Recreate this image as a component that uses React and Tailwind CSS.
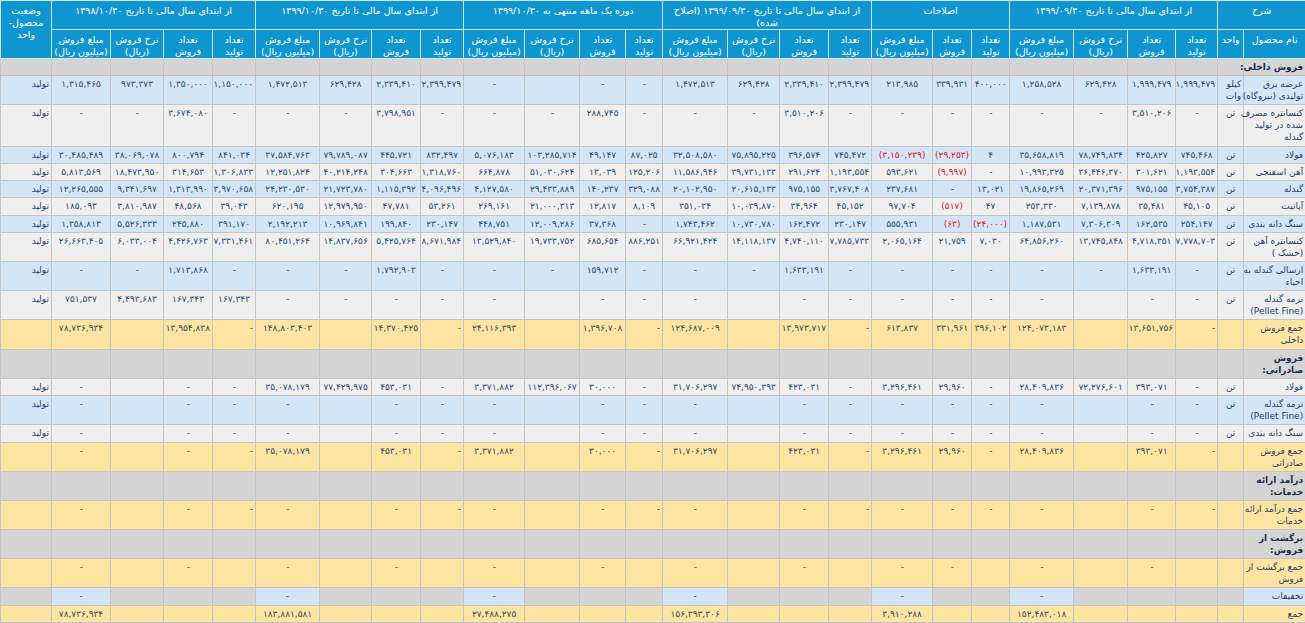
import React from 'react';

const fa = (s) => s.replace(/[0-9]/g, (d) => '۰۱۲۳۴۵۶۷۸۹'[Number(d)]);

const widths = [62, 26, 42, 48, 54, 64, 38, 39, 61, 43, 49, 52, 65, 37, 46, 55, 61, 43, 49, 52, 64, 43, 49, 53, 59, 51];

const BG = {
  blue: 'bg-[#d4e6f6]',
  gray: 'bg-[#efefef]',
  yellow: 'bg-[#fee4a1]',
  section: 'bg-[#d4d4d4]',
};

const E4 = ['-', '-', '', '-'];
const dashRow = [...E4, '-', '-', '-', ...E4, ...E4, ...E4, ...E4];

const rows = [
  { type: 'section', h: 'h-[17px]', name: ['فروش داخلی:'] },
  {
    type: 'blue', h: 'h-[29px]', name: ['عرضه برق', 'تولیدی (نیروگاه)'], unit: ['کیلو', 'وات'], status: 'تولید',
    cells: ['1,999,479', '1,999,479', '629,428', '1,258,528', '400,000', '339,931', '213,985', '2,399,479', '2,339,410', '629,428', '1,472,513', '-', '-', '', '-', '2,399,479', '2,339,410', '629,428', '1,472,513', '1,150,000', '1,350,000', '973,373', '1,315,465'],
  },
  {
    type: 'gray', h: 'h-[42px]', name: ['کنسانتره مصرف', 'شده در تولید', 'گندله'], unit: ['تن'], status: 'تولید',
    cells: ['-', '3,510,206', '-', '-', '-', '-', '-', '-', '3,510,206', '-', '-', '-', '288,745', '-', '-', '-', '3,798,951', '-', '-', '-', '3,674,080', '-', '-'],
  },
  {
    type: 'blue', h: 'h-[17px]', name: ['فولاد'], unit: ['تن'], status: 'تولید',
    cells: ['745,468', '425,827', '78,749,834', '35,658,819', '4', 'r(29,253)', 'r(3,150,239)', '745,472', '396,574', '75,895,225', '32,508,580', '87,025', '49,147', '103,285,714', '5,076,183', '832,497', '445,721', '79,789,087', '37,584,763', '841,034', '800,794', '38,069,078', '30,485,489'],
  },
  {
    type: 'gray', h: 'h-[17px]', name: ['آهن اسفنجی'], unit: ['تن'], status: 'تولید',
    cells: ['1,193,554', '301,621', '36,446,370', '10,993,325', '-', 'r(9,997)', '593,621', '1,193,554', '291,624', '39,731,133', '11,586,946', '125,206', '13,039', '51,030,624', '664,878', '1,318,760', '304,663', '40,214,248', '12,251,824', '1,306,833', '314,653', '18,473,950', '5,813,569'],
  },
  {
    type: 'blue', h: 'h-[17px]', name: ['گندله'], unit: ['تن'], status: 'تولید',
    cells: ['3,754,387', '975,155', '20,371,396', '19,865,269', '13,021', '-', '237,681', '3,767,408', '975,155', '20,615,133', '20,102,950', '329,088', '140,237', '29,433,889', '4,127,580', '4,096,496', '1,115,392', '21,723,780', '24,230,530', '3,970,658', '1,313,990', '9,341,697', '12,265,555'],
  },
  {
    type: 'gray', h: 'h-[18px]', name: ['آپاتیت'], unit: ['تن'], status: 'تولید',
    cells: ['45,105', '35,481', '7,139,878', '253,330', '47', 'r(517)', '97,704', '45,152', '34,964', '10,039,870', '351,034', '8,109', '12,817', '21,000,313', '269,161', '53,261', '47,781', '12,979,950', '620,195', '39,043', '48,568', '3,810,987', '185,093'],
  },
  {
    type: 'blue', h: 'h-[17px]', name: ['سنگ دانه بندی'], unit: ['تن'], status: 'تولید',
    cells: ['254,147', '162,535', '7,306,309', '1,187,531', 'r(24,000)', 'r(63)', '555,931', '230,147', '162,472', '10,730,780', '1,743,462', '-', '37,368', '12,009,286', '448,751', '230,147', '199,840', '10,969,841', '2,192,213', '391,170', '245,880', '5,526,333', '1,358,813'],
  },
  {
    type: 'gray', h: 'h-[29px]', name: ['کنسانتره آهن', '(خشک )'], unit: ['تن'], status: 'تولید',
    cells: ['7,778,703', '4,718,351', '13,745,848', '64,856,260', '7,030', '21,759', '2,065,164', '7,785,733', '4,740,110', '14,118,137', '66,921,424', '886,251', '685,654', '19,733,752', '13,529,840', '8,671,984', '5,425,764', '14,837,656', '80,451,264', '7,331,461', '4,426,763', '6,033,004', '26,663,405'],
  },
  {
    type: 'blue', h: 'h-[28px]', name: ['ارسالی گندله به', 'احیاء'], unit: ['تن'], status: 'تولید',
    cells: ['-', '1,633,191', '-', '-', '-', '-', '-', '-', '1,633,191', '-', '-', '-', '159,712', '-', '-', '-', '1,792,903', '-', '-', '-', '1,713,868', '-', '-'],
  },
  {
    type: 'gray', h: 'h-[29px]', name: ['نرمه گندله', '(Pellet Fine)'], unit: ['تن'], status: 'تولید',
    cells: ['-', '-', '', '-', '-', '-', '-', '-', '-', '', '-', '-', '-', '', '-', '-', '-', '-', '-', '167,343', '167,343', '4,493,683', '751,537'],
  },
  {
    type: 'yellow', h: 'h-[30px]', name: ['جمع فروش', 'داخلی'],
    cells: ['R-', '13,651,756', '', '124,073,183', '396,102', '331,961', '613,837', 'R-', '13,973,717', '', '124,687,009', 'R-', '1,396,708', '', '24,116,393', 'R-', '14,370,425', '', '148,803,403', 'R-', '13,954,838', '', '78,736,934'],
  },
  { type: 'section', h: 'h-[29px]', name: ['فروش', 'صادراتی:'] },
  {
    type: 'gray', h: 'h-[17px]', name: ['فولاد'], unit: ['تن'], status: 'تولید',
    cells: ['-', '393,071', '72,276,601', '28,409,836', '-', '29,960', '3,296,461', '-', '423,031', '74,950,393', '31,706,297', '-', '30,000', '112,396,067', '3,371,882', '-', '453,031', '77,429,975', '35,078,179', '-', '-', '', '-'],
  },
  { type: 'blue', h: 'h-[29px]', name: ['نرمه گندله', '(Pellet Fine)'], unit: ['تن'], status: 'تولید', cells: dashRow },
  { type: 'gray', h: 'h-[18px]', name: ['سنگ دانه بندی'], unit: ['تن'], status: 'تولید', cells: dashRow },
  {
    type: 'yellow', h: 'h-[28px]', name: ['جمع فروش', 'صادراتی'],
    cells: ['R-', '393,071', '', '28,409,836', '-', '29,960', '3,296,461', 'R-', '423,031', '', '31,706,297', 'R-', '30,000', '', '3,371,882', 'R-', '453,031', '', '35,078,179', 'R-', '-', '', '-'],
  },
  { type: 'section', h: 'h-[29px]', name: ['درآمد ارائه', 'خدمات:'] },
  {
    type: 'yellow', h: 'h-[29px]', name: ['جمع درآمد ارائه', 'خدمات'],
    cells: ['R-', '-', '', '-', '-', '-', '-', 'R-', '-', '', '-', 'R-', '-', '', '-', 'R-', '-', '', '-', 'R-', '-', '', '-'],
  },
  { type: 'section', h: 'h-[29px]', name: ['برگشت از', 'فروش:'] },
  {
    type: 'yellow', h: 'h-[29px]', name: ['جمع برگشت از', 'فروش'],
    cells: ['', '-', '', '-', '', '-', '-', '', '-', '', '-', '', '-', '', '-', '', '-', '', '-', '', '-', '', '-'],
  },
  {
    type: 'section', h: 'h-[18px]', name: ['تخفیفات'], nameBlue: true, plain: true,
    cells: ['', '', '', 'B-', '', '', 'B-', '', '', '', 'B-', '', '', '', 'B-', '', '', '', 'B-', '', '', '', 'B-'],
  },
  {
    type: 'yellow', h: 'h-[17px]', name: ['جمع'],
    cells: ['', '', '', '152,483,018', '', '', '3,910,288', '', '', '', '156,393,306', '', '', '', '27,488,275', '', '', '', '183,881,581', '', '', '', '78,736,934'],
  },
];

const tdBase = 'border border-[#c4c4c4] align-top px-[2px] py-[2px] leading-[12px]';

function Lines({ lines }) {
  return lines.map((l, i) => (
    <React.Fragment key={i}>
      {i > 0 && <br />}
      {l}
    </React.Fragment>
  ));
}

function ValueCell({ v, bg }) {
  let cls = `${tdBase} ${bg} text-center text-[9px] tracking-[-0.7px] whitespace-nowrap overflow-hidden`;
  let text = v;
  let color = 'text-[#2a4b6e]';
  if (v.startsWith('r')) {
    text = v.slice(1);
    color = 'text-[#e0141e]';
  } else if (v === 'R-') {
    text = '-';
    cls = `${tdBase} ${bg} text-right text-[9px] whitespace-nowrap`;
  } else if (v === 'B-') {
    text = '-';
    cls = `${tdBase} ${BG.blue} text-center text-[9px] whitespace-nowrap`;
  }
  return <td className={`${cls} ${color}`}>{fa(text)}</td>;
}

function BodyRow({ row }) {
  const bg = BG[row.type];
  const isSection = row.type === 'section' && !row.plain;
  const nameBg = row.nameBlue ? BG.blue : bg;
  const unitAlign = row.unit && row.unit.length > 1 ? 'text-right' : 'text-center';
  return (
    <tr className={row.h}>
      <td className={`${tdBase} ${nameBg} text-right text-[9px] whitespace-nowrap ${isSection ? 'font-bold text-[#1b2f4d]' : 'text-[#1e3f6c]'}`}>
        <Lines lines={row.name} />
      </td>
      <td className={`${tdBase} ${bg} ${unitAlign} text-[9px] text-[#1e3f6c] whitespace-nowrap`}>
        {row.unit ? <Lines lines={row.unit} /> : null}
      </td>
      {row.cells
        ? row.cells.map((v, i) => <ValueCell key={i} v={v} bg={bg} />)
        : Array.from({ length: 23 }).map((_, i) => <td key={i} className={`${tdBase} ${bg}`} />)}
      <td className={`${tdBase} ${bg} text-right text-[9px] text-[#1e3f6c] whitespace-nowrap`}>
        {row.status || ''}
      </td>
    </tr>
  );
}

const thBase = 'bg-[#0f96d0] text-white font-normal border border-[#cfe6f2] align-top pt-[4px] px-[2px] leading-[12px] text-[9.5px] text-center whitespace-nowrap';

function SubHeads({ withRate = true }) {
  const items = [
    ['تعداد', 'تولید'],
    ['تعداد', 'فروش'],
    ...(withRate ? [['نرخ فروش', '(ریال)']] : []),
    ['مبلغ فروش', '(میلیون ریال)'],
  ];
  return items.map((it, i) => (
    <th key={i} className={thBase}>
      <Lines lines={it} />
    </th>
  ));
}

export default function App() {
  return (
    <div className="w-[1305px] h-[623px] overflow-hidden bg-white font-['DejaVu_Sans',sans-serif]">
      <table dir="rtl" className="table-fixed border-collapse w-[1305px]">
        <colgroup>
          {widths.map((w, i) => (
            <col key={i} style={{ width: w }} />
          ))}
        </colgroup>
        <thead>
          <tr className="h-[28px]">
            <th colSpan={2} className={thBase}>شرح</th>
            <th colSpan={4} className={thBase}>{fa('از ابتدای سال مالی تا تاریخ 1399/09/30')}</th>
            <th colSpan={3} className={thBase}>اصلاحات</th>
            <th colSpan={4} className={thBase}>
              {fa('از ابتدای سال مالی تا تاریخ 1399/09/30 (اصلاح')}
              <br />
              شده)
            </th>
            <th colSpan={4} className={thBase}>{fa('دوره یک ماهه منتهی به 1399/10/30')}</th>
            <th colSpan={4} className={thBase}>{fa('از ابتدای سال مالی تا تاریخ 1399/10/30')}</th>
            <th colSpan={4} className={thBase}>{fa('از ابتدای سال مالی تا تاریخ 1398/10/30')}</th>
            <th rowSpan={2} className={thBase}>
              <Lines lines={['وضعیت', 'محصول-', 'واحد']} />
            </th>
          </tr>
          <tr className="h-[29px]">
            <th className={thBase}>نام محصول</th>
            <th className={thBase}>واحد</th>
            <SubHeads />
            <SubHeads withRate={false} />
            <SubHeads />
            <SubHeads />
            <SubHeads />
            <SubHeads />
          </tr>
        </thead>
        <tbody>
          {rows.map((r, i) => (
            <BodyRow key={i} row={r} />
          ))}
        </tbody>
      </table>
    </div>
  );
}
